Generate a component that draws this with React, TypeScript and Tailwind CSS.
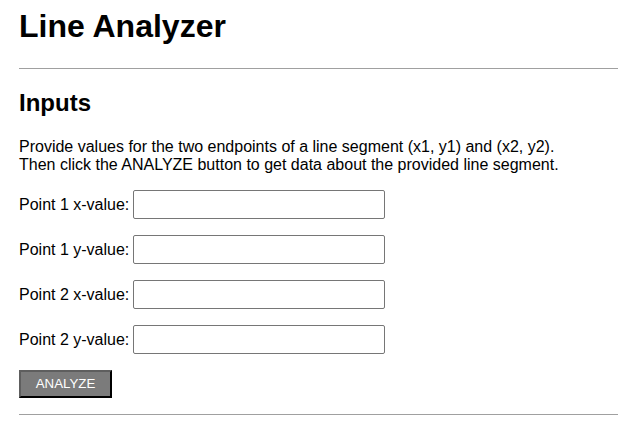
const fields = ["Point 1 x-value:", "Point 1 y-value:", "Point 2 x-value:", "Point 2 y-value:"];

export default function App() {
  return (
    <div className="min-h-screen bg-white px-[19px] text-black font-['Liberation_Sans',Arial,sans-serif]">
      <h1 className="pt-[8px] text-[32px] font-bold leading-[37px]">Line Analyzer</h1>
      <hr className="mt-[23px] border-t border-[#a0a0a0]" />

      <h2 className="mt-[20px] text-[24px] font-bold leading-[28px]">Inputs</h2>
      <p className="mt-[21px] text-[16px] leading-[18px]">
        Provide values for the two endpoints of a line segment (x1, y1) and (x2, y2).
        <br />
        Then click the ANALYZE button to get data about the provided line segment.
      </p>

      <div className="mt-[16px] flex flex-col gap-[16px]">
        {fields.map((label) => (
          <div key={label} className="flex items-center gap-[4px] text-[16px]">
            <label>{label}</label>
            <input
              type="text"
              className="h-[29px] w-[252px] rounded-[2px] border border-[#767676] px-1 outline-none"
            />
          </div>
        ))}
      </div>

      <button className="mt-[16px] h-[28px] w-[93px] border-2 border-t-[#5e5e5e] border-l-[#5e5e5e] border-b-black border-r-black bg-[#7b7b7b] text-[13.33px] text-white">
        ANALYZE
      </button>
      <hr className="mt-[16px] border-t border-[#a0a0a0]" />
    </div>
  );
}
